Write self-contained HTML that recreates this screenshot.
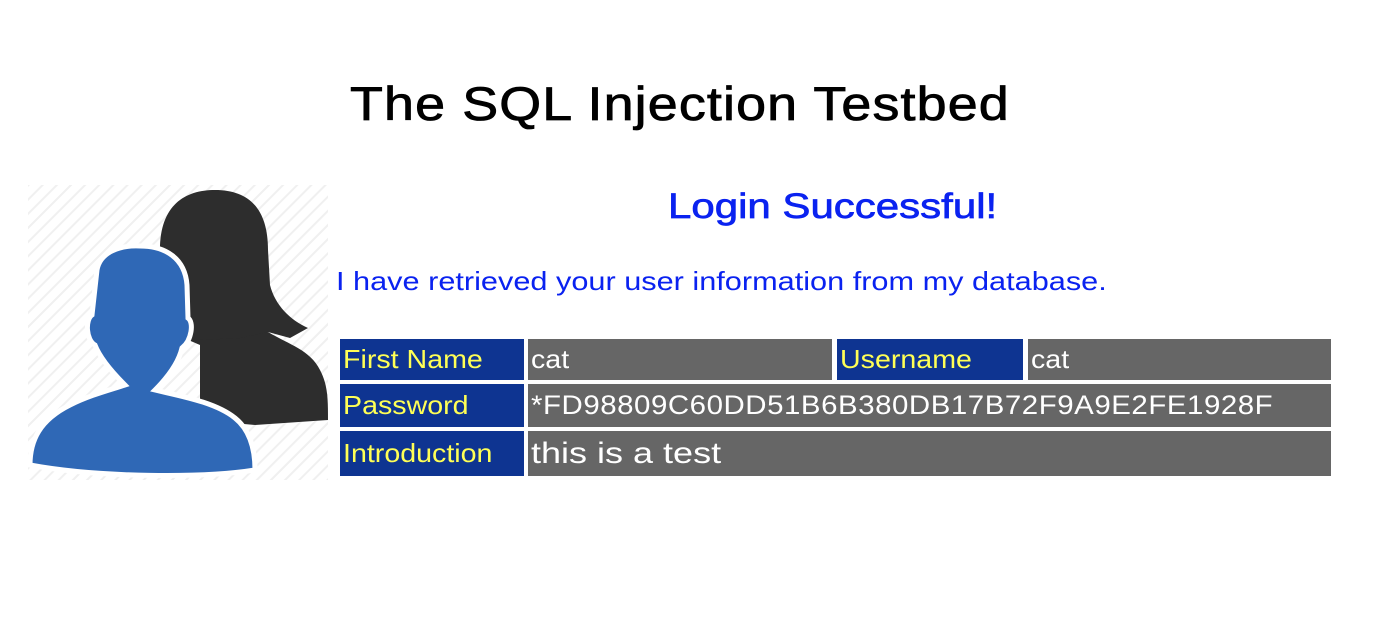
<!DOCTYPE html>
<html><head><meta charset="utf-8"><style>
body{margin:0;width:1382px;height:634px;background:#fff;position:relative;overflow:hidden;font-family:"Liberation Sans",sans-serif}
.a{position:absolute;white-space:nowrap;transform-origin:0 0}
.c{position:absolute;box-sizing:border-box;padding-left:3px;font-size:26px;line-height:40px;white-space:nowrap}
.c span{display:inline-block;transform:scaleX(1.1);transform-origin:0 50%}
.b{background:#0e3491;color:#ffff55}
.g{background:#666;color:#fff}
</style></head><body>
<svg class="a" style="left:0;top:0" width="340" height="490" viewBox="0 0 340 490">
<defs><pattern id="p" width="10" height="10" patternUnits="userSpaceOnUse" patternTransform="rotate(45)"><rect width="10" height="10" fill="#fff"/><rect width="2" height="10" fill="#f0f0f0"/></pattern></defs>
<rect x="28" y="185" width="300" height="295" fill="url(#p)"/>
<path d="M160 250 C160 205 185 190 215 190 C250 190 268 210 268 250 L270 285 C275 305 290 320 308 328 L290 338 L268 332 C250 345 220 350 200 345 L165 330 Z" fill="#2d2d2d"/>
<path d="M200 340 L240 338 L268 332 C290 345 310 350 320 370 C328 385 328 400 328 420 L255 425 L200 420 Z" fill="#2d2d2d"/>
<path d="M97 270 C100 252 120 245 140 246 C165 246 185 258 187 285 L188 318 C194 322 192 340 182 348 C178 365 165 380 155 390 C180 396 215 402 235 418 C250 430 255 450 255 470 C205 478 100 478 30 465 C30 440 40 420 70 405 C90 395 110 390 125 385 C112 372 100 358 95 345 C86 340 85 320 92 315 Z" fill="#2f68b6" stroke="#fff" stroke-width="5"/>
</svg>
<div class="a" style="left:350px;top:76px;font-size:47px;letter-spacing:1px;color:#000;transform:scaleX(1.145);-webkit-text-stroke:0.8px #000">The SQL Injection Testbed</div>
<div class="a" style="left:668px;top:187px;font-size:35px;color:#0a22f0;transform:scaleX(1.2);-webkit-text-stroke:0.7px #0a22f0">Login Successful!</div>
<div class="a" style="left:336px;top:266px;font-size:26px;color:#0a22f0;transform:scaleX(1.18)">I have retrieved your user information from my database.</div>
<div class="c b" style="left:340px;top:339px;width:184px;height:41px"><span>First Name</span></div>
<div class="c g" style="left:528px;top:339px;width:304px;height:41px"><span>cat</span></div>
<div class="c b" style="left:837px;top:339px;width:186px;height:41px"><span>Username</span></div>
<div class="c g" style="left:1028px;top:339px;width:303px;height:41px"><span>cat</span></div>
<div class="c b" style="left:340px;top:384px;width:184px;height:43px;line-height:43px"><span>Password</span></div>
<div class="c g" style="left:528px;top:384px;width:803px;height:43px;line-height:43px;font-size:27px;letter-spacing:0.5px"><span style="transform:scaleX(1.09)">*FD98809C60DD51B6B380DB17B72F9A9E2FE1928F</span></div>
<div class="c b" style="left:340px;top:431px;width:184px;height:45px;line-height:45px"><span>Introduction</span></div>
<div class="c g" style="left:528px;top:431px;width:803px;height:45px;line-height:45px;font-size:30px"><span style="transform:scaleX(1.2)">this is a test</span></div>
</body></html>
